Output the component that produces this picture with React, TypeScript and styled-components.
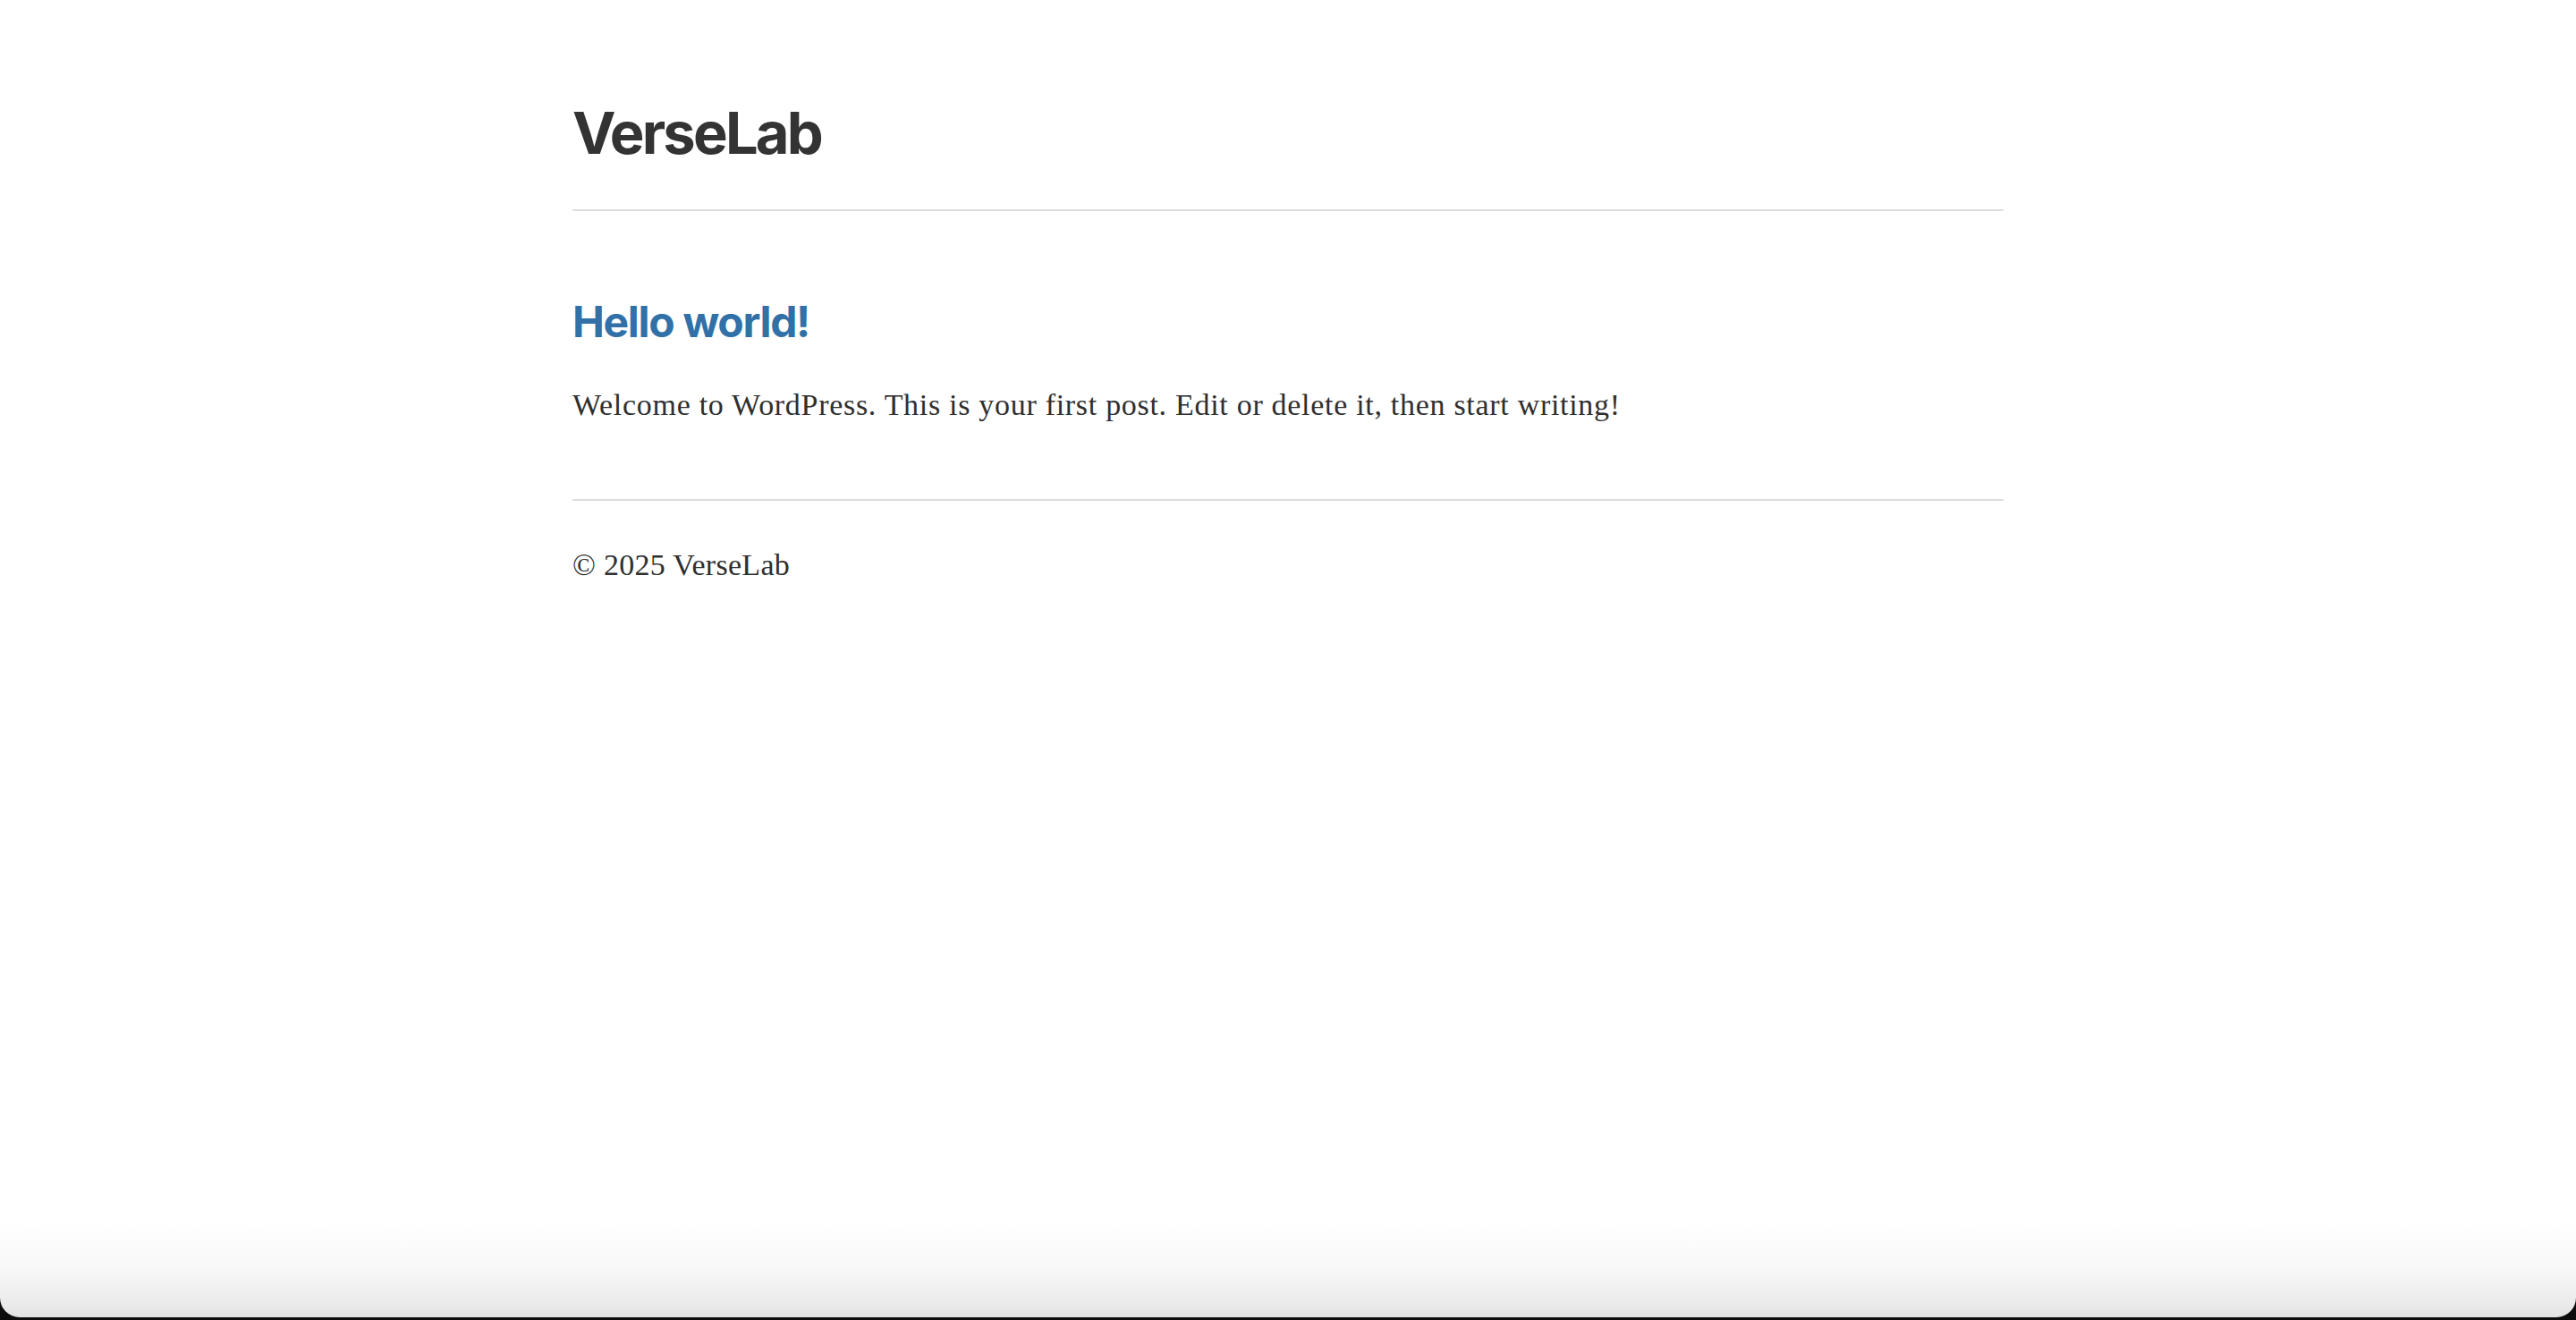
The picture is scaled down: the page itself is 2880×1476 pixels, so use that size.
import React from "react";
import styled, { createGlobalStyle } from "styled-components";

const Global = createGlobalStyle`
  html, body { margin: 0; padding: 0; background: #0d0d0d; }
  #root { min-height: 1476px; }
`;

const Window = styled.div`
  height: 1473px;
  border-radius: 0 0 22px 22px;
  overflow: hidden;
  background: linear-gradient(
    to bottom,
    #ffffff 0,
    #ffffff calc(100% - 110px),
    #f8f8f8 calc(100% - 55px),
    #ececec calc(100% - 18px),
    #e2e2e2 100%
  );
`;

const Container = styled.div`
  width: 1600px;
  margin: 0 auto;
`;

const Header = styled.header`
  padding-top: 109px;
  padding-bottom: 46px;
  border-bottom: 2px solid #dddddd;
`;

const SiteTitle = styled.h1`
  margin: 0;
  font-family: Inter, "Liberation Sans", sans-serif;
  font-weight: 700;
  font-size: 65px;
  line-height: 79px;
  letter-spacing: -2.8px;
  color: #333333;
`;

const Main = styled.main`
  padding-top: 95px;
  padding-bottom: 81px;
  border-bottom: 2px solid #dddddd;
`;

const PostTitle = styled.h2`
  margin: 0;
  font-family: Inter, "Liberation Sans", sans-serif;
  font-weight: 700;
  font-size: 48px;
  line-height: 58px;
  letter-spacing: -1.3px;
  color: #3171a8;
`;

const Body = styled.p`
  margin: 40px 0 0;
  font-family: "Liberation Serif", "DejaVu Serif", serif;
  font-size: 34px;
  line-height: 48px;
  letter-spacing: 0.7px;
  color: #2f2f2f;
`;

const Footer = styled.footer`
  padding-top: 48px;
  font-family: "Liberation Serif", "DejaVu Serif", serif;
  font-size: 34px;
  line-height: 48px;
  letter-spacing: 0.3px;
  color: #2f2f2f;
`;

export default function App() {
  return (
    <>
      <Global />
      <Window>
        <Container>
          <Header>
            <SiteTitle>VerseLab</SiteTitle>
          </Header>
          <Main>
            <PostTitle>Hello world!</PostTitle>
            <Body>
              Welcome to WordPress. This is your first post. Edit or delete it,
              then start writing!
            </Body>
          </Main>
          <Footer>© 2025 VerseLab</Footer>
        </Container>
      </Window>
    </>
  );
}
